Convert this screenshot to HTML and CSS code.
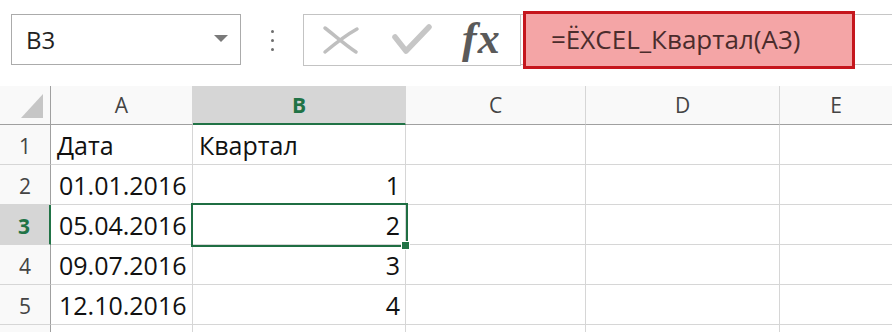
FILE: index.html
```html
<!DOCTYPE html>
<html lang="ru">
<head>
    <meta charset="UTF-8">
    <meta name="viewport" content="width=device-width, initial-scale=1.0">
    <title>ËXCEL_Квартал</title>
    <link rel="stylesheet" href="styles.css">
</head>
<body>
    <div class="toolbar">
      <div class="name-box">
        <span class="name-box-value">B3</span>
        <svg class="name-box-arrow" width="14" height="8" viewBox="0 0 14 8"><path d="M0 0h14L7 7z"/></svg>
      </div>

      <div class="toolbar-dots">
        <span></span><span></span><span></span>
      </div>

      <div class="formula-buttons">
        <svg class="formula-icon" width="38" height="30" viewBox="0 0 38 30">
          <path d="M3 3c8 6 19 16 31 24" />
          <path d="M35 4c-9 5-20 13-32 23" />
        </svg>
        <svg class="formula-icon formula-icon-enter" width="40" height="32" viewBox="0 0 40 32">
          <path d="M3 13l11 14L37 3" />
        </svg>
        <span class="formula-fx">fx</span>
      </div>

      <div class="formula-bar">
        <div class="formula-input">=ËXCEL_Квартал(A3)</div>
      </div>
    </div>

    <section class="sheet">
      <div class="sheet-cell sheet-corner">
        <svg width="22" height="24" viewBox="0 0 22 24"><path d="M22 0v24H0z"/></svg>
      </div>
      <div class="sheet-cell sheet-col-head">A</div>
      <div class="sheet-cell sheet-col-head sheet-col-head-active">B</div>
      <div class="sheet-cell sheet-col-head">C</div>
      <div class="sheet-cell sheet-col-head">D</div>
      <div class="sheet-cell sheet-col-head sheet-last">E</div>

      <div class="sheet-cell sheet-row-head">1</div>
      <div class="sheet-cell">Дата</div>
      <div class="sheet-cell">Квартал</div>
      <div class="sheet-cell"></div>
      <div class="sheet-cell"></div>
      <div class="sheet-cell sheet-last"></div>

      <div class="sheet-cell sheet-row-head">2</div>
      <div class="sheet-cell sheet-cell-date">01.01.2016</div>
      <div class="sheet-cell sheet-cell-number">1</div>
      <div class="sheet-cell"></div>
      <div class="sheet-cell"></div>
      <div class="sheet-cell sheet-last"></div>

      <div class="sheet-cell sheet-row-head sheet-row-head-active">3</div>
      <div class="sheet-cell sheet-cell-date">05.04.2016</div>
      <div class="sheet-cell sheet-cell-number sheet-cell-active">2</div>
      <div class="sheet-cell"></div>
      <div class="sheet-cell"></div>
      <div class="sheet-cell sheet-last"></div>

      <div class="sheet-cell sheet-row-head">4</div>
      <div class="sheet-cell sheet-cell-date">09.07.2016</div>
      <div class="sheet-cell sheet-cell-number">3</div>
      <div class="sheet-cell"></div>
      <div class="sheet-cell"></div>
      <div class="sheet-cell sheet-last"></div>

      <div class="sheet-cell sheet-row-head">5</div>
      <div class="sheet-cell sheet-cell-date">12.10.2016</div>
      <div class="sheet-cell sheet-cell-number">4</div>
      <div class="sheet-cell"></div>
      <div class="sheet-cell"></div>
      <div class="sheet-cell sheet-last"></div>

      <div class="sheet-cell sheet-row-head sheet-row-cut"></div>
      <div class="sheet-cell sheet-row-cut"></div>
      <div class="sheet-cell sheet-row-cut"></div>
      <div class="sheet-cell sheet-row-cut"></div>
      <div class="sheet-cell sheet-row-cut"></div>
      <div class="sheet-cell sheet-last sheet-row-cut"></div>
    </section>
</body>
</html>
```

FILE: styles.css
```css
html,
body {
  height: 100%;
}

body {
  margin: 0;
  padding: 0;
  overflow: hidden;
  background-color: #ffffff;
  font-family: "Open Sans", "Liberation Sans", sans-serif;
  color: #111111;
}

.toolbar {
  display: flex;
  align-items: flex-start;
  box-sizing: border-box;
  height: 86px;
  padding-top: 14px;
}

.name-box {
  display: flex;
  align-items: flex-start;
  box-sizing: border-box;
  width: 230px;
  height: 51px;
  margin-left: 11px;
  padding: 2px 12px 0 14px;

  border: 1px solid #ababab;
  background-color: #ffffff;
}

.name-box-value {
  flex-grow: 1;
  font-size: 24px;
  line-height: 46px;
  color: #222222;
}

.name-box-arrow {
  margin-top: 18px;
  fill: #7a7a7a;
}

.toolbar-dots {
  display: flex;
  flex-direction: column;
  align-items: center;
  width: 62px;
  padding-top: 16px;
}

.toolbar-dots span {
  width: 3px;
  height: 3px;
  margin-bottom: 6px;
  border-radius: 50%;
  background-color: #6e6e6e;
}

.formula-buttons {
  display: flex;
  align-items: center;
  box-sizing: border-box;
  width: 218px;
  height: 52px;
  padding-left: 18px;

  border: 1px solid #c3c3c3;
  background-color: #ffffff;
}

.formula-icon {
  fill: none;
  stroke: #bfbfbf;
  stroke-width: 3.5;
  stroke-linecap: round;
}

.formula-icon-enter {
  margin-left: 32px;
  stroke: #c6c6c6;
  stroke-width: 5.5;
  stroke-linejoin: round;
}

.formula-fx {
  margin-left: 30px;
  margin-top: -2px;
  font-family: "Liberation Serif", serif;
  font-style: italic;
  font-weight: 700;
  font-size: 44px;
  line-height: 48px;
  letter-spacing: 1px;
  color: #5a5a5a;
}

.formula-bar {
  display: flex;
  align-items: flex-start;
  flex-grow: 1;
  box-sizing: border-box;
  height: 51px;

  border-top: 1px solid #c6c6c6;
  border-bottom: 1px solid #c6c6c6;
}

.formula-input {
  box-sizing: border-box;
  width: 332px;
  height: 58px;
  margin: -4px 0 0 2px;
  padding-left: 25px;

  border: 3px solid #c5161d;
  background-color: #f4a5a6;

  font-size: 26px;
  line-height: 51px;
  color: #4a2c2c;
  white-space: nowrap;
}

.sheet {
  display: grid;
  grid-template-columns: 51px 142px 213px 180px 194px 1fr;
  grid-template-rows: 39px repeat(5, 40px) 7px;
}

.sheet-cell {
  box-sizing: border-box;
  padding: 0 6px;

  border-right: 1px solid #d6d6d6;
  border-bottom: 1px solid #d6d6d6;
  background-color: #ffffff;

  font-size: 25px;
  line-height: 40px;
  white-space: nowrap;
}

.sheet-row-cut {
  border-bottom: none;
}

.sheet-cell-date {
  padding-left: 8px;
}

.sheet-cell-number {
  padding-right: 5px;
  text-align: right;
}

.sheet-corner {
  display: flex;
  align-items: flex-end;
  justify-content: flex-end;
  padding: 0 7px 6px 0;
  border-right-color: #a0a0a0;
  border-bottom-color: #a0a0a0;
  background-color: #f9f9f9;
  fill: #c6c6c6;
}

.sheet-col-head {
  padding: 0;
  border-bottom-color: #a0a0a0;
  background-color: #f9f9f9;

  font-size: 21px;
  line-height: 38px;
  text-align: center;
  color: #444444;
}

.sheet-col-head-active {
  border-bottom: 2px solid #217346;
  background-color: #d6d6d6;
  font-weight: 700;
  color: #217346;
}

.sheet-row-head {
  padding: 0;
  border-right-color: #a0a0a0;
  background-color: #f9f9f9;

  font-size: 21px;
  line-height: 43px;
  text-align: center;
  color: #444444;
}

.sheet-row-head-active {
  padding-right: 1px;
  border-right: 2px solid #217346;
  background-color: #d6d6d6;
  font-weight: 700;
  color: #217346;
}

.sheet-cell-active {
  position: relative;
  z-index: 1;
  outline: 2px solid #1f6e43;
}

.sheet-cell-active::after {
  content: "";
  position: absolute;
  right: -5px;
  bottom: -6px;
  width: 7px;
  height: 7px;
  border: 1px solid #ffffff;
  background-color: #217346;
}

.sheet-last {
  border-right: none;
}
```
